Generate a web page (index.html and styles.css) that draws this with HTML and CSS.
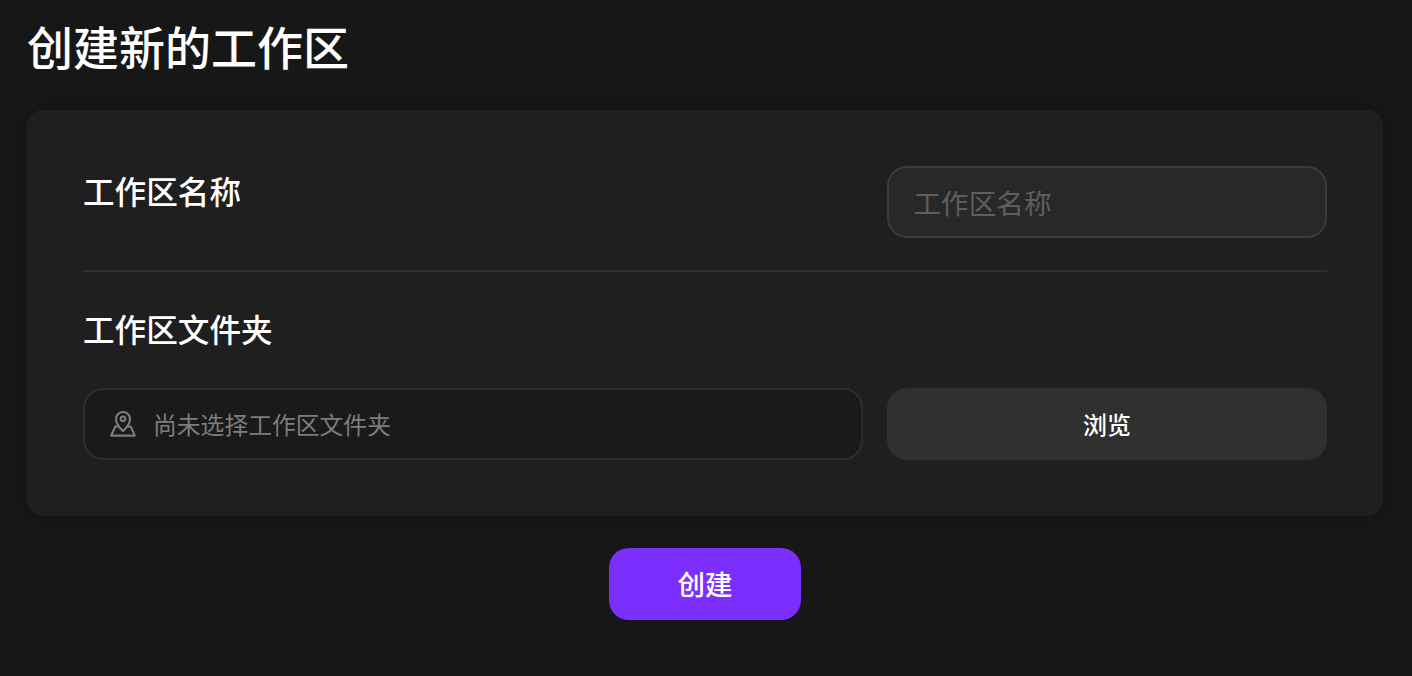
FILE: index.html
```html
<!DOCTYPE html>
<html lang="zh-CN">
<head>
<meta charset="utf-8">
<title>创建新的工作区</title>
<link rel="stylesheet" href="styles.css">
</head>
<body>
<main class="page">
  <h1 class="title">创建新的工作区</h1>
  <section class="card">
    <div class="name-row">
      <label class="label" for="name">工作区名称</label>
      <input class="name-input" id="name" type="text" placeholder="工作区名称">
    </div>
    <hr class="divider">
    <div class="label folder-label">工作区文件夹</div>
    <div class="folder-row">
      <div class="folder-field">
        <svg class="pin" viewBox="0 0 26 26" fill="none" stroke="currentColor" stroke-width="2.1" stroke-linejoin="round" stroke-linecap="round" aria-hidden="true">
          <path d="M13 20C9.2 16.6 6 13.2 6 8a7 7 0 0 1 14 0C20 13.2 16.8 16.6 13 20Z"/>
          <circle cx="13" cy="7.8" r="2.3"/>
          <path d="M7.2 15.6H5.2L1.2 24.6H24.8L20.8 15.6H18.8"/>
        </svg>
        <span class="folder-text">尚未选择工作区文件夹</span>
      </div>
      <button class="browse" type="button">浏览</button>
    </div>
  </section>
  <div class="actions">
    <button class="create" type="button">创建</button>
  </div>
</main>
</body>
</html>
```

FILE: styles.css
```css
* { box-sizing: border-box; }
html, body { margin: 0; height: 100%; }
body {
  background: #171717;
  color: #fff;
  font-family: "Noto Sans CJK SC", "Noto Sans", sans-serif;
}
.page { padding: 13px 29px 0 27px; }
.title {
  margin: 0 0 33px;
  font-size: 46px;
  line-height: 64px;
  font-weight: 500;
  color: #fff;
}
.card {
  background: #1f1f1f;
  border-radius: 16px;
  padding: 56px;
  box-shadow: 0 0 24px rgba(0, 0, 0, 0.18);
}
.name-row {
  display: flex;
  justify-content: space-between;
  align-items: flex-start;
  padding-bottom: 32px;
}
.label {
  display: block;
  font-size: 31.6px;
  line-height: 48px;
  font-weight: 500;
  color: #fff;
}
.name-input {
  width: 440px;
  height: 72px;
  padding: 0 24.5px;
  background: #282828;
  border: 2px solid #3a3a3a;
  border-radius: 20px;
  color: #fff;
  font: 400 27.6px "Noto Sans CJK SC", sans-serif;
  outline: none;
}
.name-input::placeholder { color: #5e5e5e; opacity: 1; }
.divider {
  margin: 0;
  height: 2px;
  border: 0;
  background: #2f2f2f;
}
.folder-label { margin-top: 32px; }
.folder-row {
  display: flex;
  gap: 24px;
  margin-top: 36px;
}
.folder-field {
  flex: 1;
  height: 72px;
  display: flex;
  align-items: center;
  gap: 17px;
  padding: 0 25px;
  background: #1a1a1a;
  border: 2px solid #2e2e2e;
  border-radius: 20px;
  color: #7d7d7d;
}
.pin { width: 26px; height: 26px; flex: none; }
.folder-text { font-size: 23.8px; line-height: 32px; }
.browse {
  flex: none;
  width: 440px;
  height: 72px;
  padding: 0 0 2px;
  background: #303030;
  border: 0;
  border-radius: 20px;
  color: #fff;
  font: 500 24px "Noto Sans CJK SC", sans-serif;
}
.actions {
  display: flex;
  justify-content: center;
  margin-top: 32px;
}
.create {
  width: 192px;
  height: 72px;
  padding: 0 0 3px;
  background: #7c2eff;
  border: 0;
  border-radius: 20px;
  color: #fff;
  font: 500 27.5px "Noto Sans CJK SC", sans-serif;
}
```
